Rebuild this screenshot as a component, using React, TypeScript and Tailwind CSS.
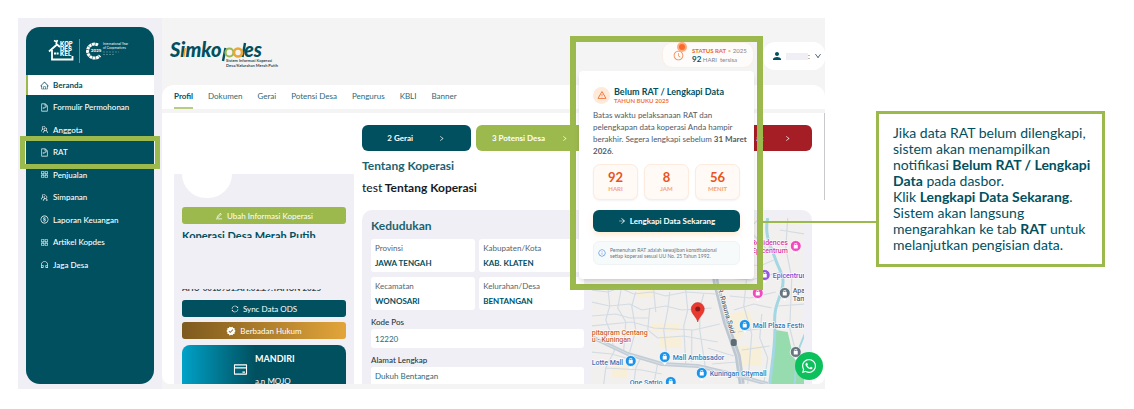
import type { ReactNode } from "react";
import {
    AiOutlineAppstore,
    AiOutlineArrowRight,
    AiOutlineClockCircle,
    AiOutlineCreditCard,
    AiOutlineCustomerService,
    AiOutlineDollarCircle,
    AiOutlineDown,
    AiOutlineEdit,
    AiOutlineFileText,
    AiOutlineHome,
    AiOutlineInfoCircle,
    AiOutlineRight,
    AiOutlineSync,
    AiOutlineTeam,
    AiOutlineUsergroupAdd,
    AiOutlineWarning,
} from "react-icons/ai";
import { FaWhatsapp } from "react-icons/fa";
import { MdPerson, MdVerified } from "react-icons/md";

const menu = [
    { label: "Formulir Permohonan", icon: AiOutlineFileText },
    { label: "Anggota", icon: AiOutlineTeam },
    { label: "RAT", icon: AiOutlineFileText, marked: true },
    { label: "Penjualan", icon: AiOutlineAppstore },
    { label: "Simpanan", icon: AiOutlineUsergroupAdd },
    { label: "Laporan Keuangan", icon: AiOutlineDollarCircle },
    { label: "Artikel Kopdes", icon: AiOutlineAppstore },
    { label: "Jaga Desa", icon: AiOutlineCustomerService },
];

const tabs = ["Profil", "Dokumen", "Gerai", "Potensi Desa", "Pengurus", "KBLI", "Banner"];

const wilayah = [
    { label: "Provinsi", value: "JAWA TENGAH" },
    { label: "Kabupaten/Kota", value: "KAB. KLATEN" },
    { label: "Kecamatan", value: "WONOSARI" },
    { label: "Kelurahan/Desa", value: "BENTANGAN" },
];

const countdown = [
    { value: 92, unit: "HARI" },
    { value: 8, unit: "JAM" },
    { value: 56, unit: "MENIT" },
];

function SidebarLogo() {
    return (
        <svg viewBox="0 0 90 24" className="h-6 w-[90px] overflow-visible" fill="none" role="img" aria-label="Kopdes Kel">
            <path d="M4 12.500L12 5.500L15 8M7 11V20.500H27.500V17" stroke="#fff" strokeWidth="1.800" />
            <path d="M9 1.500l3 1.500M11 5l1.500-4" stroke="#fff" strokeWidth="1.600" />
            <path d="M9 13.500h2v2H9zM11.600 13.500h2v2h-2z" fill="#fff" />
            <g fill="#fff" fontFamily="Inter, sans-serif" fontWeight="800" fontSize="6">
                <text x="15" y="7">KOP</text>
                <text x="15" y="12">DES</text>
                <text x="15" y="17">KEL</text>
            </g>
            <path d="M34.500 0v24" stroke="#8fb0b6" strokeWidth="0.700" />
            <path d="M53 6A7 7 0 1 0 55 16.500" stroke="#fff" strokeWidth="3" strokeDasharray="2.800 0.500" />
            <text x="46" y="13" fill="#fff" fontFamily="Inter, sans-serif" fontWeight="700" fontSize="4">2025</text>
            <g fill="#e2ecee" fontFamily="Inter, sans-serif" fontSize="3">
                <text x="58" y="6">International Year</text>
                <text x="58" y="10">of Cooperatives</text>
            </g>
            <path d="M58 13h16M58 15.500h12" stroke="#4c8590" strokeWidth="0.900" strokeDasharray="2 1" />
        </svg>
    );
}

function SimkopdesLogo() {
    return (
        <svg viewBox="0 0 112 30" className="h-[30px] w-28 overflow-visible" role="img" aria-label="Simkopdes">
            <g fill="#00505f" fontFamily="Lato, sans-serif" fontWeight="900" fontStyle="italic" fontSize="20">
                <text x="0" y="15">Simko</text>
                <text x="74" y="15">es</text>
            </g>
            <path d="M15.200 6l-1.400 9" stroke="#eaa636" strokeWidth="1.600" />
            <path d="M55.500 6l-2.500 13" stroke="#00505f" strokeWidth="2.400" />
            <path d="M75 1l-2.500 14" stroke="#00505f" strokeWidth="2.400" />
            <circle cx="59.500" cy="10.500" r="4" fill="none" stroke="#9cb94e" strokeWidth="2.200" />
            <circle cx="68" cy="10.500" r="4" fill="none" stroke="#eaa636" strokeWidth="2.600" />
            <g fill="#33474c" fontFamily="Lato, sans-serif" fontWeight="700" fontSize="4">
                <text x="56" y="20">Sistem Informasi Koperasi</text>
                <text x="56" y="25">Desa/Kelurahan Merah Putih</text>
            </g>
        </svg>
    );
}

function Sidebar() {
    return (
        <aside className="flex w-36 shrink-0 flex-col px-2 pt-[9px] pb-[5px]">
            <nav className="flex flex-1 flex-col rounded-[14px] bg-[#00505f] text-[8px] font-medium text-white">
                <div className="flex h-12 items-center pl-[19px]">
                    <SidebarLogo />
                </div>
                <a href="#beranda" className="flex h-5 items-center gap-1 border-l-2 border-[#9cb94e] bg-white pl-3 font-bold text-[#00505f]">
                    <AiOutlineHome className="size-[9px]" />
                    Beranda
                </a>
                <div className="mt-px grid h-[180px] grid-rows-8">
                    {menu.map(({ label, icon: Icon, marked }) => (
                        <a key={label} href={"#" + label} className="relative flex items-center gap-1 pl-[14px]">
                            <Icon className="size-[9px]" />
                            {label}
                            {marked && <span className="absolute -inset-x-[6px] -inset-y-[5px] border-[5px] border-[#9cb94e]" />}
                        </a>
                    ))}
                </div>
            </nav>
        </aside>
    );
}

function Header() {
    return (
        <header className="flex h-[67px] items-start gap-[9px] pt-6 pl-2">
            <SimkopdesLogo />
            <div className="ml-auto flex h-[26px] w-[92px] items-center gap-2 rounded-[10px] border border-[#fbeee4] bg-[#fdfcfb] pl-[10px]">
                <div className="relative">
                    <AiOutlineClockCircle className="size-[11px] text-[#f0894f]" />
                    <span className="absolute -top-2 left-1 size-[10px] rounded-full border-2 border-[#ffab80] bg-[#fb6a2c]" />
                </div>
                <div className="text-[6px] leading-[9px] whitespace-nowrap text-[#7d8791]">
                    <p>
                        <b className="text-[#f0662a]">STATUS RAT</b> <span className="text-[#f9b88f]">•</span> 2025
                    </p>
                    <p>
                        <b className="text-[8px] text-[#00505f]">92</b> HARI&nbsp; tersisa
                    </p>
                </div>
            </div>
            <button className="flex h-7 w-[62px] items-center rounded-[12px] bg-white pl-2 text-[#00505f]" aria-label="Akun">
                <MdPerson className="size-3" />
                <span className="ml-[3px] h-[7px] w-[22px] bg-[#efeff5]" />
                <span className="text-[7px]">:</span>
                <AiOutlineDown className="ml-1 size-2 text-[#33474c]" />
            </button>
        </header>
    );
}

function ProfileCard() {
    return (
        <div className="mt-[61px] w-[180px] shrink-0 bg-[#f0eff5] px-2 text-[8px] text-white">
            <div className="h-6 w-[50px] rounded-b-full bg-white" />
            <button className="mt-[9px] flex h-[17px] w-full items-center justify-center gap-1 rounded-[3px] bg-[#9cb94e]">
                <AiOutlineEdit className="size-2" />
                Ubah Informasi Koperasi
            </button>
            <h2 className="mt-[6px] h-2 overflow-hidden text-[11px] leading-3 font-bold whitespace-nowrap text-[#00505f]">
                Koperasi Desa Merah Putih
            </h2>
            <p className="mt-[51px] flex h-[3px] items-end overflow-hidden text-[8px] leading-[7px] font-bold whitespace-nowrap text-[#33474c]">
                AHU-0018931.AH.01.29.TAHUN 2025
            </p>
            <button className="mt-2 flex h-[17px] w-full items-center justify-center gap-1 rounded-[3px] bg-[#00505f]">
                <AiOutlineSync className="size-2" />
                Sync Data ODS
            </button>
            <button className="mt-[5px] flex h-[17px] w-full items-center justify-center gap-1 rounded-[3px] bg-linear-to-r from-[#7d5a1e] to-[#e3a53a]">
                <MdVerified className="size-[10px]" />
                Berbadan Hukum
            </button>
            <div className="mt-[6px] flex h-[39px] items-start overflow-hidden rounded-t-[8px] bg-linear-to-r from-[#00a2c8] to-[#00505f] to-45% pl-[51px]">
                <AiOutlineCreditCard className="mt-[17px] size-[15px]" />
                <div className="pt-[9px] pl-[7px]">
                    <p className="text-[9px] leading-[10px] font-bold">MANDIRI</p>
                    <p className="mt-3 leading-[10px]">a.n MOJO</p>
                </div>
            </div>
        </div>
    );
}

function StatButton({ color, children }: { color: string; children: ReactNode }) {
    return (
        <button className={"flex h-[26px] items-center justify-evenly rounded-[6px] text-[8px] font-bold whitespace-nowrap text-white " + color}>
            <span>{children}</span>
            <AiOutlineRight className="size-[7px]" />
        </button>
    );
}

function Pin({ x, y, color }: { x: number; y: number; color: string }) {
    return (
        <g>
            <path d={`M${x - 5} ${y + 2}L${x} ${y + 8}L${x + 5} ${y + 2}z`} fill="#fff" />
            <circle cx={x} cy={y} r="5.500" fill={color} stroke="#fff" strokeWidth="0.800" />
            <path d={`M${x - 2} ${y - 1}h4v3.500h-4z`} fill="#fff" />
            <path d={`M${x - 1} ${y - 1}v-1.500h2v1.500`} fill="none" stroke="#fff" strokeWidth="0.700" />
        </g>
    );
}

function LocationMap() {
    return (
        <svg viewBox="0 0 213 166" preserveAspectRatio="xMidYMid slice" className="mt-2 h-[166px] w-full" role="img" aria-label="Peta lokasi">
            <rect width="213" height="166" fill="#f2f0ef" />
            <path d="M60 106h28v8h-28zM68 118h22v12h-22zM138 96l18-4 6 12-18 20zM144 128h26v20h-20zM20 146h16v14h-16zM118 50l12-2 2 12-12 2zM46 70h18v10h-18z" fill="#f8efd9" />
            <path d="M184 112l12 2 4 18 8 12 5 6v16h-35l3-28z" fill="#97dcae" />
            <path d="M176 0C172 18 180 30 184 42S194 58 190 72 182 90 183 108 180 146 178 166" fill="none" stroke="#a3d7e3" strokeWidth="3" />
            <path d="M203 166l2-30 8-20" fill="none" stroke="#a3d7e3" strokeWidth="2" />
            <g fill="none" stroke="#d3dbe3" strokeWidth="1.200">
                <path d="M0 72l16 2 12-4 14 6 18-2 14 4 20-4 30 2M0 84l18 4 20-2 12 6 24-4 16 4 30-2M0 98l24-2 14 4 18 0M58 90l-2 22 10 8 26-2 34 6M0 108l40-4 22 6 40 2 26-6" />
                <path d="M16 68l2 20-4 14 6 16 2 14M30 68l-4 22 8 14-2 28M44 74l-4 14 4 24-6 22M62 72l2 22M78 74l-2 18-4 20 4 34M94 72l2 20-4 16 2 38M112 76l-4 14 0 22 6 40M24 130l-10 20-2 16M50 138l-6 12-2 16M66 145l-4 21M100 112v32M0 134l20 2 14 4M14 150l36 2 20 4" />
                <path d="M150 4l24 26M168 0l-18 18M136 20l34 14 10-6M140 44l28 4 14-6M134 60l26 2 28-8M138 78l20 2 26-6M142 92l20-6 18 4M156 48l-4 40 8 28-4 50M196 0l-2 30 6 30-2 50 6 24M170 96l-2 24 8 20-4 26M188 12l25 4M186 88l27-2M146 114l26-4M150 132l28-4M116 130l26 8M120 146l26-2" />
            </g>
            <path d="M120 30l4 34 10 40 12 34 4 28" fill="none" stroke="#bcc7d1" strokeWidth="6" />
            <path d="M0 119l36 17 34 10 36 2 34 8 36 10" fill="none" stroke="#c3cdd6" strokeWidth="4" />
            <path d="M120 30l4 34 10 40 12 34 4 28M0 119l36 17 34 10 36 2 34 8 36 10" fill="none" stroke="#e4e9ee" strokeWidth="0.600" />
            <Pin x={204} y={28} color="#f04bbd" />
            <Pin x={166} y={75} color="#f04bbd" />
            <Pin x={173} y={57} color="#9457e0" />
            <Pin x={193} y={75} color="#66757f" />
            <Pin x={204} y={134} color="#66757f" />
            <Pin x={153} y={107} color="#1a93e8" />
            <Pin x={73} y={139} color="#1a93e8" />
            <Pin x={39} y={143} color="#1a93e8" />
            <Pin x={110} y={155} color="#1a93e8" />
            <Pin x={79} y={164} color="#1a93e8" />
            <rect x="139" y="121" width="6" height="7" rx="2" fill="#5f6b75" />
            <path d="M106 104c-1-5-6.500-8-6.500-13a6.500 6.500 0 0 1 13 0c0 5-5.500 8-6.500 13z" fill="#ea3a30" stroke="#c5221f" strokeWidth="0.500" />
            <circle cx="106" cy="91" r="2.500" fill="#8c1a16" />
            <g fontFamily="Roboto, sans-serif" fontSize="7" fontWeight="500" stroke="#fff" strokeWidth="1.200" paintOrder="stroke">
                <g fill="#d8369f" textAnchor="end">
                    <text x="196" y="27">Residences</text>
                    <text x="196" y="35">Epicentrum</text>
                </g>
                <text x="181" y="60" fill="#7a4bd0">Epicentrum</text>
                <g fill="#56636d">
                    <text x="201" y="75">Apa</text>
                    <text x="201" y="83">Tam</text>
                    <text transform="translate(126 71) rotate(74)">R. Rasuna Said</text>
                </g>
                <g fill="#c9622e">
                    <text x="0" y="117">pitagram Centang</text>
                    <text x="0" y="124">u - Kuningan</text>
                </g>
                <g fill="#3277b8">
                    <text x="161" y="110">Mall Plaza Festival</text>
                    <text x="81" y="142">Mall Ambasador</text>
                    <text x="0" y="147">Lotte Mall</text>
                    <text x="118" y="158">Kuningan Citymall</text>
                    <text x="38" y="167">One Satrio</text>
                </g>
            </g>
        </svg>
    );
}

function Kedudukan() {
    return (
        <section className="mt-[13px] grid grid-cols-2 gap-2 rounded-t-[10px] bg-[#f0eff5] pr-2 pl-[9px]">
            <div className="pt-[7px]">
                <h3 className="text-[12px] leading-[18px] font-bold text-[#1d6270]">Kedudukan</h3>
                <dl className="mt-1 grid grid-cols-2 gap-x-1 gap-y-[5px]">
                    {wilayah.map((w) => (
                        <div key={w.label} className="h-[33px] rounded-[3px] bg-white pt-1 pl-1 text-[8px] whitespace-nowrap">
                            <dt className="leading-[11px] text-[#56636d]">{w.label}</dt>
                            <dd className="mt-1 leading-[11px] font-bold text-[#00505f]">{w.value}</dd>
                        </div>
                    ))}
                </dl>
                <label htmlFor="kodepos" className="mt-[6px] block text-[8px] leading-3 font-medium text-[#27363c]">
                    Kode Pos
                </label>
                <input id="kodepos" defaultValue="12220" className="mt-px block h-[19px] w-full rounded-[3px] bg-white px-1 text-[8px] text-[#2d6a76]" />
                <label htmlFor="alamat" className="mt-[6px] block text-[8px] leading-3 font-medium text-[#27363c]">
                    Alamat Lengkap
                </label>
                <input id="alamat" defaultValue="Dukuh Bentangan" className="mt-px block h-[17px] w-full rounded-t-[3px] bg-white px-1 text-[8px] text-[#2d6a76]" />
            </div>
            <LocationMap />
        </section>
    );
}

function RatPopup() {
    return (
        <div className="absolute top-[18px] right-[62px] w-[193px] border-[6px] border-[#9cb94e] px-[3px] pt-[29px] pb-[5px]">
            <div role="dialog" aria-label="Belum RAT / Lengkapi Data" className="rounded-[4px] bg-white p-[14px] shadow-md">
                <div className="flex h-5 items-center gap-1">
                    <span className="flex size-[17px] items-center justify-center rounded-full bg-[#feead9] text-[#f0662a]">
                        <AiOutlineWarning className="size-[10px]" />
                    </span>
                    <div className="whitespace-nowrap">
                        <h4 className="text-[9px] leading-[11px] font-bold text-[#00505f]">Belum RAT / Lengkapi Data</h4>
                        <p className="text-[6px] leading-[7px] font-bold text-[#f0783f]">TAHUN BUKU 2025</p>
                    </div>
                </div>
                <p className="mt-1 text-[8px] leading-3 whitespace-nowrap text-[#4f5b66]">
                    Batas waktu pelaksanaan RAT dan
                    <br />
                    pelengkapan data koperasi Anda hampir
                    <br />
                    berakhir. Segera lengkapi sebelum <b>31 Maret</b>
                    <br />
                    <b>2026</b>.
                </p>
                <div className="mt-[7px] grid grid-cols-3 gap-[6px]">
                    {countdown.map((c) => (
                        <div key={c.unit} className="h-9 rounded-[7px] border border-[#fdebdd] bg-[#fffaf6] pt-[6px] text-center shadow-xs">
                            <p className="text-[13px] leading-[13px] font-bold text-[#e9531d]">{c.value}</p>
                            <p className="mt-px text-[6px] leading-[8px] font-bold text-[#f6a273]">{c.unit}</p>
                        </div>
                    ))}
                </div>
                <button className="mt-[10px] flex h-[22px] w-full items-center justify-center gap-1 rounded-[6px] bg-[#00505f] text-[8px] font-bold text-white shadow-md shadow-orange-100">
                    <AiOutlineArrowRight className="size-2" />
                    Lengkapi Data Sekarang
                </button>
                <div className="mt-[9px] flex h-6 items-center gap-1 rounded-[6px] border border-[#eef4f6] bg-[#f7fafb] pl-1 text-[5px] leading-[6px] whitespace-nowrap text-[#68747e]">
                    <AiOutlineInfoCircle className="size-2 text-[#3f83dd]" />
                    <p>
                        Pemenuhan RAT adalah kewajiban konstitusional
                        <br />
                        setiap koperasi sesuai UU No. 25 Tahun 1992.
                    </p>
                </div>
            </div>
            {/* garis ke kotak keterangan */}
            <span className="absolute top-[179px] left-full h-[2px] w-[119px] bg-[#9cb94e]" />
        </div>
    );
}

function Dashboard() {
    return (
        <div className="relative flex min-w-0 flex-1 bg-[#f0eff5]">
            <Sidebar />
            <main className="min-w-0 flex-1 bg-[#f4f4f4] pb-[5px]">
                <Header />
                <nav className="flex h-6 gap-[15px] rounded-t-[12px] bg-white pl-3 text-[8px] whitespace-nowrap text-[#2d6a76]">
                    {tabs.map((t, i) => (
                        <a
                            key={t}
                            href={"#" + t}
                            className={i === 0 ? "flex items-center border-b-2 border-[#b9cc7f] font-bold text-[#00505f]" : "flex items-center border-b-2 border-transparent"}
                        >
                            {t}
                        </a>
                    ))}
                </nav>
                <div className="relative mt-1 flex gap-2 rounded-b-[8px] bg-white pr-[13px] pl-3">
                    <span className="absolute top-0 right-0 h-[87px] w-px bg-[#c9c9cd]" />
                    <ProfileCard />
                    <div className="min-w-0 flex-1 pt-3">
                        <div className="grid grid-cols-4 gap-[5px]">
                            <StatButton color="bg-[#00505f]">2 Gerai</StatButton>
                            <StatButton color="bg-[#9cb94e]">3 Potensi Desa</StatButton>
                            <span />
                            <StatButton color="bg-[#a61e25]">
                                <span className="pl-8">at</span>
                            </StatButton>
                        </div>
                        <h3 className="mt-[6px] text-[12px] leading-[18px] font-bold text-[#1d6270]">Tentang Koperasi</h3>
                        <p className="mt-1 text-[12px] leading-[18px] font-bold text-[#171b26]">
                            <span className="font-medium">test</span> Tentang Koperasi
                        </p>
                        <Kedudukan />
                    </div>
                </div>
            </main>
            <RatPopup />
            <a href="#whatsapp" aria-label="WhatsApp" className="absolute right-[2px] bottom-[9px] flex size-7 items-center justify-center rounded-full bg-[#0cc15c] text-white">
                <FaWhatsapp className="size-4" />
            </a>
        </div>
    );
}

export default function App() {
    return (
        <div className="flex min-h-screen items-start bg-white pt-[18px] pr-[29px] pl-[18px] font-[Lato,Inter,sans-serif]">
            <Dashboard />
            <aside className="mt-[93px] ml-[51px] w-[229px] shrink-0 border-[3px] border-[#9cb94e] bg-white py-[11px] pl-[14px] text-[14px] leading-4 whitespace-nowrap text-[#00505f]">
                <p>
                    Jika data RAT belum dilengkapi,
                    <br />
                    sistem akan menampilkan
                    <br />
                    notifikasi <b>Belum RAT / Lengkapi</b>
                    <br />
                    <b>Data</b> pada dasbor.
                </p>
                <p>
                    Klik <b>Lengkapi Data Sekarang</b>.
                    <br />
                    Sistem akan langsung
                    <br />
                    mengarahkan ke tab <b>RAT</b> untuk
                    <br />
                    melanjutkan pengisian data.
                </p>
            </aside>
        </div>
    );
}
